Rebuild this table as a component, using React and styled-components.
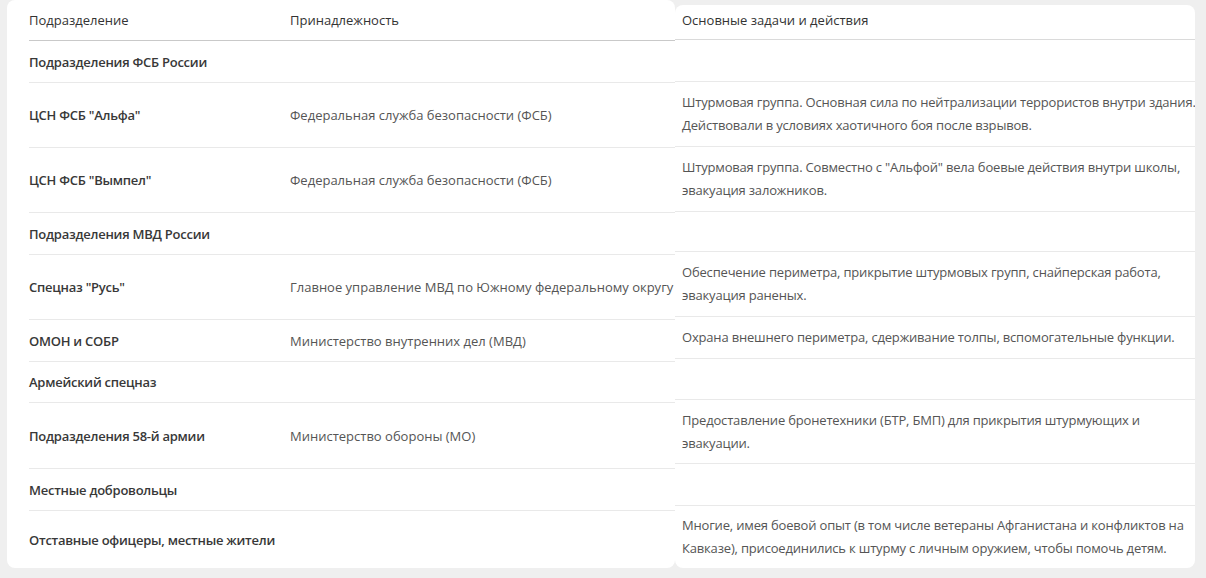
import React from 'react'
import styled, { createGlobalStyle } from 'styled-components'

const GlobalStyle = createGlobalStyle`
  html, body {
    margin: 0;
    padding: 0;
    background: #efefef;
  }
  * {
    box-sizing: border-box;
  }
`

const units = [
  { name: 'Подразделения ФСБ России', group: true, h: 42, rh: 42 },
  {
    name: 'ЦСН ФСБ "Альфа"',
    owner: 'Федеральная служба безопасности (ФСБ)',
    tasks: [
      'Штурмовая группа. Основная сила по нейтрализации террористов внутри здания.',
      'Действовали в условиях хаотичного боя после взрывов.',
    ],
    h: 65,
    rh: 65,
  },
  {
    name: 'ЦСН ФСБ "Вымпел"',
    owner: 'Федеральная служба безопасности (ФСБ)',
    tasks: [
      'Штурмовая группа. Совместно с "Альфой" вела боевые действия внутри школы,',
      'эвакуация заложников.',
    ],
    h: 65,
    rh: 65,
  },
  { name: 'Подразделения МВД России', group: true, h: 42, rh: 40 },
  {
    name: 'Спецназ "Русь"',
    owner: 'Главное управление МВД по Южному федеральному округу',
    tasks: [
      'Обеспечение периметра, прикрытие штурмовых групп, снайперская работа,',
      'эвакуация раненых.',
    ],
    h: 65,
    rh: 65,
  },
  {
    name: 'ОМОН и СОБР',
    owner: 'Министерство внутренних дел (МВД)',
    tasks: ['Охрана внешнего периметра, сдерживание толпы, вспомогательные функции.'],
    h: 42,
    rh: 42,
  },
  { name: 'Армейский спецназ', group: true, h: 41, rh: 41 },
  {
    name: 'Подразделения 58-й армии',
    owner: 'Министерство обороны (МО)',
    tasks: [
      'Предоставление бронетехники (БТР, БМП) для прикрытия штурмующих и',
      'эвакуации.',
    ],
    h: 66,
    rh: 64,
  },
  { name: 'Местные добровольцы', group: true, h: 42, rh: 42 },
  {
    name: 'Отставные офицеры, местные жители',
    tasks: [
      'Многие, имея боевой опыт (в том числе ветераны Афганистана и конфликтов на',
      'Кавказе), присоединились к штурму с личным оружием, чтобы помочь детям.',
    ],
    h: 57,
    rh: 62,
    last: true,
  },
]

const Page = styled.div`
  display: flex;
  align-items: flex-start;
  width: 1206px;
  height: 578px;
  padding: 0 11px 0 7px;
  font-family: 'Open Sans', 'Noto Sans', Arial, sans-serif;
  font-size: 13px;
`

const Card = styled.div`
  background: #ffffff;
  border-radius: 8px;
  height: ${props => props.height}px;
  margin-top: ${props => props.offset || 0}px;
  overflow: hidden;
`

const LeftCard = styled(Card)`
  width: 668px;
  padding-left: 22px;
`

const RightCard = styled(Card)`
  width: 520px;
`

const Row = styled.div`
  display: grid;
  grid-template-columns: ${props => props.columns};
  align-items: center;
  height: ${props => props.height}px;
  border-bottom: ${props => props.last ? 'none' : `1px solid ${props.line || '#e9e9e9'}`};
`

const HeadCell = styled.div`
  color: #333333;
  white-space: nowrap;
  padding-left: ${props => props.pad || 0}px;
  padding-bottom: ${props => props.lift || 0}px;
`

const NameCell = styled.div`
  color: #383838;
  font-weight: 600;
  letter-spacing: -0.25px;
  white-space: nowrap;
`

const OwnerCell = styled.div`
  color: #555555;
  white-space: nowrap;
`

const TaskCell = styled.div`
  color: #555555;
  padding-left: 7px;
  line-height: 23px;
  letter-spacing: -0.18px;
  white-space: nowrap;
`

const TaskLine = styled.div``

export default function App() {
  return (
    <Page>
      <GlobalStyle />
      <LeftCard height={568}>
        <Row columns='261px 1fr' height={41} line='#c9c9c9'>
          <HeadCell>Подразделение</HeadCell>
          <HeadCell>Принадлежность</HeadCell>
        </Row>
        {units.map((u, i) => (
          <Row key={i} columns='261px 1fr' height={u.h} last={u.last}>
            <NameCell>{u.name}</NameCell>
            <OwnerCell>{u.owner || ''}</OwnerCell>
          </Row>
        ))}
      </LeftCard>
      <RightCard height={563} offset={5}>
        <Row columns='1fr' height={35} line='#dadada'>
          <HeadCell pad={7} lift={4}>Основные задачи и действия</HeadCell>
        </Row>
        {units.map((u, i) => (
          <Row key={i} columns='1fr' height={u.rh} last={u.last}>
            <TaskCell>
              {(u.tasks || []).map((t, j) => (
                <TaskLine key={j}>{t}</TaskLine>
              ))}
            </TaskCell>
          </Row>
        ))}
      </RightCard>
    </Page>
  )
}
